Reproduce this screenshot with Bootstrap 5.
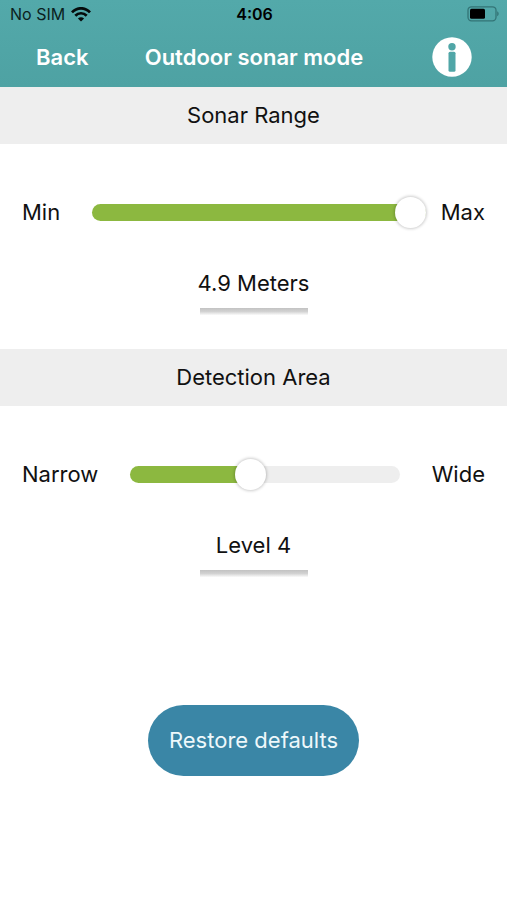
<!DOCTYPE html>
<html lang="en">
<head>
<meta charset="utf-8">
<meta name="viewport" content="width=device-width, initial-scale=1">
<title>Outdoor sonar mode</title>
<link href="https://cdn.jsdelivr.net/npm/bootstrap@5.3.0/dist/css/bootstrap.min.css" rel="stylesheet">
<style>
  body { font-family: Inter, "Liberation Sans", sans-serif; font-size: 22px; line-height: 32px; color: #111; background: #fff; }
  .app-head { background: linear-gradient(#53a9aa, #4ea2a3); }
  .status-bar { height: 28px; padding: 0 8px 0 10px; font-size: 16px; line-height: 28px; color: #0b1f20; }
  .carrier { gap: 6px; }
  .title-bar { height: 59px; padding: 0 35px 2px 36px; font-size: 22px; }
  .page-title { font-size: 22px; line-height: 32px; }
  .thirds { display: grid; grid-template-columns: 1fr auto 1fr; align-items: center; }
  .section-title { height: 57px; font-size: 22px; line-height: 57px; background: #eee; }
  .section-body { padding: 51px 22px 34px 22px; }
  .slider-row { height: 34px; margin-bottom: 38px; }
  .slider-start { margin-right: 32px; }
  .slider-end { margin-left: 32px; }
  .slider-end-near { margin-left: 15px; }
  .sonar-range { -webkit-appearance: none; appearance: none; min-width: 0; height: 31px; margin: 0; background: transparent; }
  .sonar-range::-webkit-slider-runnable-track { height: 17px; border-radius: 9px; background: linear-gradient(to right, #8cb840 var(--fill), #eee var(--fill)); }
  .sonar-range::-webkit-slider-thumb { -webkit-appearance: none; width: 31px; height: 31px; margin-top: -7px; border: 0; border-radius: 50%; background: #fff; box-shadow: 0 0 3px 1px rgba(0,0,0,.2); }
  .sonar-range::-moz-range-track { height: 17px; border-radius: 9px; background: linear-gradient(to right, #8cb840 var(--fill), #eee var(--fill)); }
  .sonar-range::-moz-range-thumb { width: 31px; height: 31px; border: 0; border-radius: 50%; background: #fff; box-shadow: 0 0 3px 1px rgba(0,0,0,.2); }
  .reading-line { width: 108px; height: 7px; margin-top: 9px; background: linear-gradient(#c2c2c2, #d2d2d2 50%, #fafafa); }
  .restore-btn { margin-top: 94px; height: 71px; padding: 0 21px; font-size: 22px; border: 0; color: #eef8fb; background: #3a86a6; }
  .restore-btn:hover { color: #fff; background: #32789a; }
</style>
</head>
<body>
<header class="app-head">
  <div class="status-bar thirds">
    <div class="carrier d-flex align-items-center">
      <span>No SIM</span>
      <svg width="20" height="15" viewBox="0 0 20 15" fill="none" stroke="#050b0b" stroke-width="2.7" aria-hidden="true">
        <path d="M1 5.4C6-.1 14-.1 19 5.4"/>
        <path d="M4.3 8.8c3.200-3.400 8.200-3.400 11.400 0"/>
        <path d="M10 14.600 6.900 11.400c1.700-1.700 4.500-1.700 6.200 0z" fill="#050b0b" stroke="none"/>
      </svg>
    </div>
    <span class="fw-semibold text-black">4:06</span>
    <svg class="ms-auto" width="32" height="16" viewBox="0 0 32 16" role="img" aria-label="Battery at half">
      <rect x="1" y=".8" width="28" height="14" rx="3.500" fill="none" stroke="#337476" stroke-width="1.300"/>
      <rect x="3" y="2.800" width="15" height="10" rx="1.500" fill="#000"/>
      <path d="M30.200 5.300c1.900.8 1.900 4.200 0 5z" fill="#337476"/>
    </svg>
  </div>
  <nav class="title-bar thirds fw-semibold text-white">
    <a href="#" class="text-white text-decoration-none">Back</a>
    <h1 class="page-title m-0 fw-semibold">Outdoor sonar mode</h1>
    <button type="button" class="btn border-0 p-0 ms-auto d-flex" aria-label="Information">
      <svg width="40" height="40" viewBox="0 0 40 40" aria-hidden="true">
        <circle cx="20" cy="20" r="19.700" fill="#fff"/>
        <circle cx="20" cy="9.800" r="3.700" fill="#50a6a7"/>
        <rect x="16.500" y="14.800" width="7" height="20" rx="1.500" fill="#50a6a7"/>
      </svg>
    </button>
  </nav>
</header>
<main>
  <section>
    <h2 class="section-title m-0 fw-normal text-center">Sonar Range</h2>
    <div class="section-body">
      <div class="slider-row d-flex align-items-center">
        <label for="range" class="slider-start">Min</label>
        <input id="range" type="range" class="sonar-range flex-fill" min="0" max="100" value="100" aria-valuetext="4.9 Meters" style="--fill:100%">
        <span class="slider-end-near">Max</span>
      </div>
      <output for="range" class="d-block text-center">4.9 Meters</output>
      <div class="reading-line mx-auto"></div>
    </div>
  </section>
  <section>
    <h2 class="section-title m-0 fw-normal text-center">Detection Area</h2>
    <div class="section-body">
      <div class="slider-row d-flex align-items-center">
        <label for="area" class="slider-start">Narrow</label>
        <input id="area" type="range" class="sonar-range flex-fill" min="0" max="100" value="44" aria-valuetext="Level 4" style="--fill:44%">
        <span class="slider-end">Wide</span>
      </div>
      <output for="area" class="d-block text-center">Level 4</output>
      <div class="reading-line mx-auto"></div>
    </div>
  </section>
  <div class="text-center">
    <button type="button" class="btn rounded-pill restore-btn">Restore defaults</button>
  </div>
</main>
<script src="https://cdn.jsdelivr.net/npm/bootstrap@5.3.0/dist/js/bootstrap.bundle.min.js"></script>
</body>
</html>
